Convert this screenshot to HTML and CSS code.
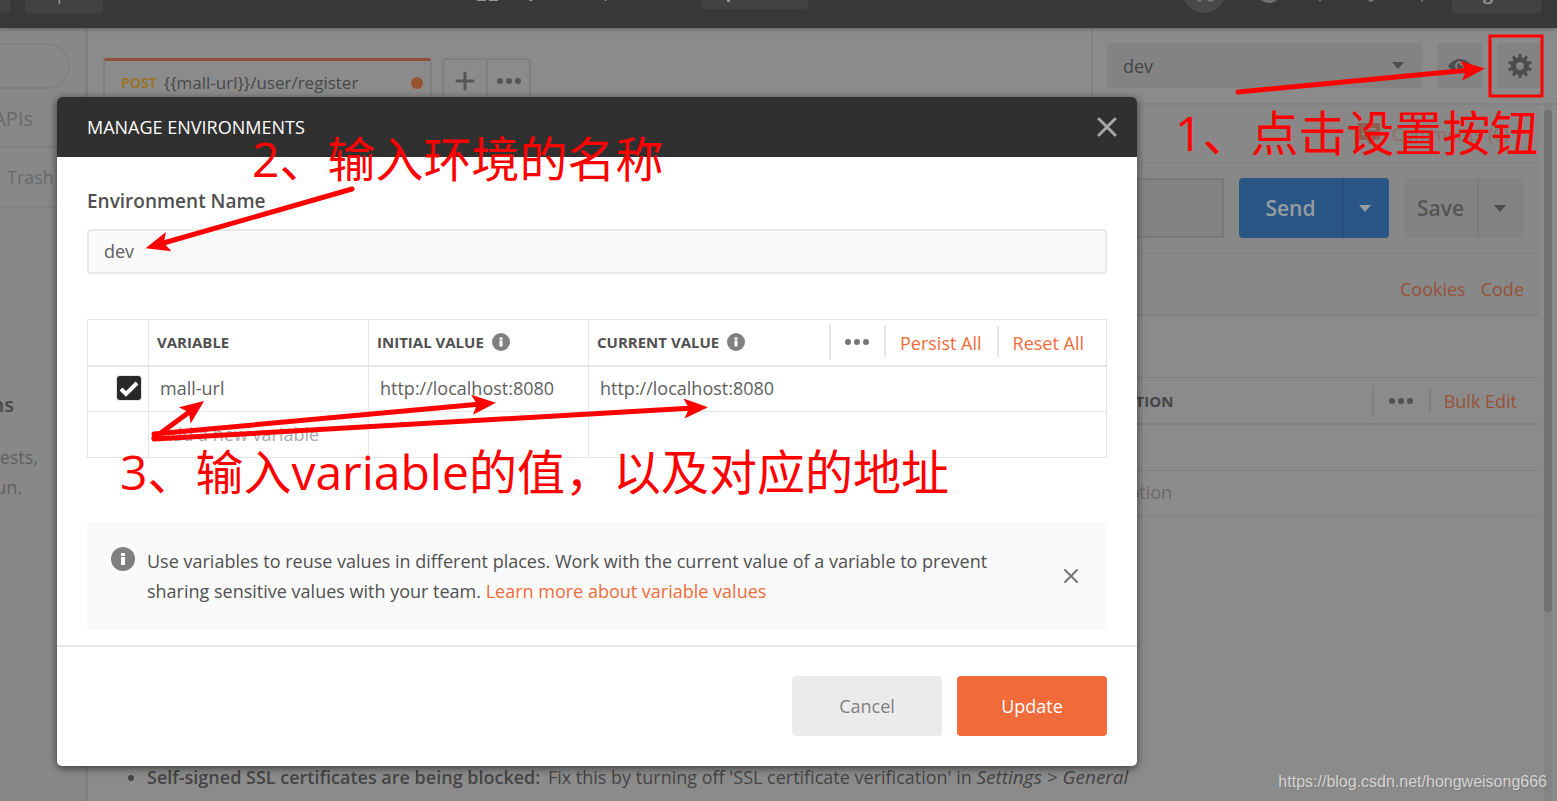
FILE: index.html
```html
<!DOCTYPE html>
<html lang="en">
<head>
<meta charset="utf-8">
<title>Manage Environments</title>
<link rel="stylesheet" href="styles.css">
</head>
<body>
<div class="app">
  <header class="topbar">
    <button class="top-btn new-btn" type="button" aria-label="New"></button>
    <button class="top-btn import-btn" type="button">Import</button>
    <div class="workspace-menu">
      <svg class="grid-icon" width="22" height="22" viewBox="0 0 22 22" aria-hidden="true"><path d="M0 0h9v9H0zM12 0h9v9h-9zM0 12h9v9H0zM12 12h9v9h-9z"/></svg>
      <span>My Workspace</span>
    </div>
    <button class="top-btn invite-btn" type="button"><svg width="15" height="15" viewBox="0 0 15 15" aria-hidden="true"><path d="M6 0h3v6h6v3H9v6H6V9H0V6h6z"/></svg>Invite</button>
    <div class="top-icons">
      <svg class="sync" width="44" height="44" viewBox="0 0 44 44" aria-hidden="true"><circle class="disc" cx="22" cy="22" r="22"/><path class="line" d="M13 29l5 3 4-5M24 28q4 6 8 2"/></svg>
      <svg width="26" height="26" viewBox="0 0 26 26" aria-hidden="true"><circle cx="13" cy="13" r="13"/></svg>
      <svg width="26" height="26" viewBox="0 0 26 26" aria-hidden="true"><path d="M13 25L3 13h20z"/></svg>
      <svg width="26" height="26" viewBox="0 0 26 26" aria-hidden="true"><path d="M4 19h18l-3-6V4H7v9zM10 22a3 3 0 0 0 6 0z"/></svg>
      <svg width="26" height="26" viewBox="0 0 26 26" aria-hidden="true"><path d="M13 25L2 12l3-7 8 3 8-3 3 7z"/></svg>
    </div>
    <button class="top-btn signin-btn" type="button">Sign In</button>
  </header>

  <div class="columns">
    <aside class="sidebar">
      <div class="search"></div>
      <div class="side-tab">APIs</div>
      <div class="side-trash">Trash</div>
      <div class="side-empty">
        <h2>collections</h2>
        <p>group related requests,</p>
        <p class="last">access and run.</p>
      </div>
    </aside>

    <main class="main">
      <div class="tabs-row">
        <div class="tabs">
          <div class="tab"><b>POST</b><span>{{mall-url}}/user/register</span><i class="dot"></i></div>
          <div class="tab-tools">
            <button type="button" aria-label="New tab"><svg width="20" height="20" viewBox="0 0 20 20"><path class="plus" d="M10 2v16M2 10h16"/></svg></button>
            <button type="button" aria-label="Tab options"><svg width="26" height="8" viewBox="0 0 26 8"><circle cx="4" cy="4" r="3"/><circle cx="13" cy="4" r="3"/><circle cx="22" cy="4" r="3"/></svg></button>
          </div>
        </div>
        <div class="env">
          <div class="select-wrap">
            <select class="env-select" aria-label="Environment"><option>dev</option></select>
            <svg class="caret" width="12" height="7" viewBox="0 0 12 7" aria-hidden="true"><path d="M0 0h12L6 7z"/></svg>
          </div>
          <button class="icon-btn" type="button" aria-label="Environment quick look"><svg width="24" height="16" viewBox="0 0 24 16"><path fill-rule="evenodd" d="M0 8Q5 1 12 1t12 7q-5 7-12 7T0 8zm12-5a5 5 0 1 0 0 10 5 5 0 0 0 0-10zm0 2q-1 3 3 3a3 3 0 1 1-3-3z"/></svg></button>
          <button class="icon-btn" type="button" aria-label="Manage environments"><svg width="24" height="24" viewBox="-12 -12 24 24"><path class="teeth" d="M0-12V12M-7-9.700L7 9.700M7-9.700L-7 9.700M-11.400-3.700L11.400 3.700M-11.400 3.700L11.400-3.700"/><circle r="9"/><circle class="hole" r="4"/></svg></button>
        </div>
      </div>

      <div class="request">
        <div class="builder">
          <div class="comments"><svg width="24" height="24" viewBox="0 0 24 24" aria-hidden="true"><path fill-rule="evenodd" d="M1 1h22v17H16l-3 5-3-5H1zM5 6v2h14V6zM5 11v2h14v-2z"/></svg>Comments (0)</div>
          <div class="url-row">
            <input class="url" type="text" aria-label="Request URL">
            <div class="split send"><button type="button">Send</button><button type="button" aria-label="Send options"><svg width="12" height="7" viewBox="0 0 12 7"><path d="M0 0h12L6 7z"/></svg></button></div>
            <div class="split save"><button type="button">Save</button><button type="button" aria-label="Save options"><svg width="12" height="7" viewBox="0 0 12 7"><path d="M0 0h12L6 7z"/></svg></button></div>
          </div>
          <nav class="links"><a href="#">Cookies</a><a href="#">Code</a></nav>
          <div class="params">
            <div class="params-head"><strong>DESCRIPTION</strong><svg width="26" height="8" viewBox="0 0 26 8" aria-hidden="true"><circle cx="4" cy="4" r="3"/><circle cx="13" cy="4" r="3"/><circle cx="22" cy="4" r="3"/></svg><a href="#">Bulk Edit</a></div>
            <div class="params-row"></div>
            <div class="params-row">Description</div>
          </div>
          <ul class="tips"><li><b>Self-signed SSL certificates are being blocked:</b> Fix this by turning off 'SSL certificate verification' in <em>Settings &gt; General</em></li></ul>
        </div>
        <div class="scroll"><div class="thumb"></div></div>
      </div>
    </main>
  </div>

  <section class="modal" role="dialog" aria-labelledby="modal-title">
    <header class="modal-head">
      <h1 id="modal-title">MANAGE ENVIRONMENTS</h1>
      <button class="close" type="button" aria-label="Close"><svg width="20" height="20" viewBox="0 0 20 20"><path d="M2 2l16 16M18 2L2 18"/></svg></button>
    </header>
    <div class="modal-body">
      <label class="field-label" for="env-name">Environment Name</label>
      <input class="field" id="env-name" type="text" value="dev">
      <table class="vars">
        <colgroup><col class="c-check"><col class="c-var"><col class="c-var"><col></colgroup>
        <thead>
          <tr>
            <th></th>
            <th>VARIABLE</th>
            <th><div class="th">INITIAL VALUE<svg class="info" width="18" height="18" viewBox="0 0 24 24" aria-hidden="true"><circle cx="12" cy="12" r="12"/><path d="M10 6h4v3h-4zM10 10h4v8h-4z"/></svg></div></th>
            <th><div class="th">CURRENT VALUE<svg class="info" width="18" height="18" viewBox="0 0 24 24" aria-hidden="true"><circle cx="12" cy="12" r="12"/><path d="M10 6h4v3h-4zM10 10h4v8h-4z"/></svg>
              <div class="actions"><button class="more" type="button" aria-label="More"><svg width="26" height="8" viewBox="0 0 26 8"><circle cx="4" cy="4" r="3"/><circle cx="13" cy="4" r="3"/><circle cx="22" cy="4" r="3"/></svg></button><a href="#">Persist All</a><a href="#">Reset All</a></div></div></th>
          </tr>
        </thead>
        <tbody>
          <tr>
            <td class="check-cell"><label class="check"><input type="checkbox" checked aria-label="Enable mall-url"><svg width="24" height="24" viewBox="0 0 24 24" aria-hidden="true"><path d="M4 13l5 5L20 7"/></svg></label></td>
            <td><input type="text" value="mall-url" aria-label="Variable"></td>
            <td><input type="text" value="http://localhost:8080" aria-label="Initial value"></td>
            <td><input type="text" value="http://localhost:8080" aria-label="Current value"></td>
          </tr>
          <tr>
            <td></td>
            <td><input type="text" placeholder="Add a new variable" aria-label="New variable"></td>
            <td></td>
            <td></td>
          </tr>
        </tbody>
      </table>
      <div class="notice">
        <svg class="info" width="24" height="24" viewBox="0 0 24 24" aria-hidden="true"><circle cx="12" cy="12" r="12"/><path d="M10 6h4v3h-4zM10 10h4v8h-4z"/></svg>
        <p>Use variables to reuse values in different places. Work with the current value of a variable to prevent sharing sensitive values with your team. <a href="#">Learn more about variable values</a></p>
        <button class="dismiss" type="button" aria-label="Dismiss"><svg width="16" height="16" viewBox="0 0 16 16"><path d="M2 2l12 12M14 2L2 14"/></svg></button>
      </div>
    </div>
    <footer class="modal-foot">
      <button class="btn cancel" type="button">Cancel</button>
      <button class="btn update" type="button">Update</button>
    </footer>
  </section>

  <svg class="arrows" width="100%" height="100%" aria-hidden="true">
    <defs>
      <marker id="head" markerUnits="userSpaceOnUse" markerWidth="30" markerHeight="24" refX="9" refY="12" orient="auto"><path d="M24 12L0 2l5 10-5 10z"/></marker>
    </defs>
    <path class="shaft" d="M1238 92L1470 70"/>
    <path class="shaft" d="M352 189L160 244"/>
    <path class="shaft" d="M154 438L192 410"/>
    <path class="shaft" d="M154 434L481 404"/>
    <path class="shaft" d="M154 439L693 408"/>
    <rect x="1490" y="36" width="52" height="60"/>
  </svg>
  <p class="note note-1" lang="zh">1、点击设置按钮</p>
  <p class="note note-2" lang="zh">2、输入环境的名称</p>
  <p class="note note-3" lang="zh">3、输入variable的值，以及对应的地址</p>
  <p class="watermark">https://blog.csdn.net/hongweisong666</p>
</div>
</body>
</html>
```
FILE: styles.css
```css
* { box-sizing: border-box; }
body { margin: 0; font: 18px/30px "Open Sans", "Noto Sans", sans-serif; color: #505050; }
h1, h2, p, ul { margin: 0; }
button, input, select { font: inherit; color: inherit; border: 0; margin: 0; padding: 0; background: none; }
svg { display: block; flex: none; }
a { color: #f26b3a; text-decoration: none; }

.app { position: relative; height: 100vh; min-height: 801px; display: flex; flex-direction: column; background: #8b8b8b; overflow: hidden; }

.topbar { position: relative; height: 28px; flex: none; display: flex; align-items: flex-end; background: #383838; color: #959595; fill: #959595; padding: 0 15px 15px 0; box-shadow: 0 1px 4px rgba(0, 0, 0, .3); }
.top-btn { flex: none; height: 40px; border-radius: 4px; background: #424242; }
.new-btn { width: 10px; }
.import-btn { width: 78px; margin-left: 15px; }
.workspace-menu { display: flex; align-items: center; gap: 12px; height: 48px; margin-left: 374px; font-size: 20px; }
.grid-icon { margin-top: 4px; }
.invite-btn { display: flex; align-items: center; justify-content: center; gap: 8px; width: 106px; height: 44px; margin: 0 auto 4px 55px; }
.invite-btn svg { margin-top: 14px; }
.top-icons { display: flex; align-items: flex-end; gap: 25px; fill: #707070; margin-right: 17px; }
.top-icons svg { margin-bottom: 10px; }
.top-icons .sync { margin: 0 5px 0 0; }
.disc { fill: #4a4a4a; }
.line { fill: none; stroke: #777; stroke-width: 2; }
.signin-btn { width: 90px; font-weight: 600; }

.columns { flex: 1; display: flex; min-height: 0; }
.sidebar { width: 88px; flex: none; display: flex; flex-direction: column; background: #888; border-right: 3px solid #7f7f7f; color: #6a6a6a; overflow: hidden; }
.search { width: 90px; height: 46px; margin: 15px 0 0 -20px; border: 2px solid #818181; border-radius: 23px; }
.side-tab { display: flex; justify-content: flex-end; align-items: center; height: 59px; padding: 2px 52px 0 0; font-size: 20px; border-bottom: 2px solid #808080; }
.side-trash { display: flex; align-items: center; height: 60px; padding-left: 7px; border-bottom: 2px solid #808080; }
.side-empty { display: flex; flex-direction: column; align-items: flex-end; padding-top: 182px; color: #606060; white-space: nowrap; }
.side-empty h2 { margin: 0 71px 22px 0; font-size: 20px; line-height: 30px; font-weight: 600; color: #484848; }
.side-empty p { margin-right: 47px; }
.side-empty .last { margin-right: 63px; }

.main { flex: 1; min-width: 0; display: flex; flex-direction: column; }
.tabs-row { display: flex; height: 77px; flex: none; border-bottom: 2px solid #828282; }
.tabs { flex: 1; display: flex; align-items: flex-end; gap: 10px; padding-left: 15px; }
.tab { display: flex; align-items: center; gap: 7px; width: 329px; height: 45px; padding: 4px 7px 0 16px; border: 2px solid #808080; border-top: 3px solid #8f4f3a; border-radius: 4px 4px 0 0; font-size: 17px; color: #484848; }
.tab b { font-size: 14px; color: #98752a; }
.dot { width: 12px; height: 12px; margin-left: auto; border-radius: 50%; background: #97522f; }
.tab-tools { display: flex; height: 45px; border: 2px solid #808080; border-radius: 4px 4px 0 0; fill: #555; }
.tab-tools button { display: grid; place-items: center; width: 42px; }
.tab-tools button + button { width: 43px; border-left: 2px solid #808080; }
.plus { fill: none; stroke: #555; stroke-width: 3; stroke-linecap: round; }
.env { display: flex; gap: 15px; padding: 15px 15px 0 14px; border-left: 2px solid #828282; fill: #4c4c4c; }
.select-wrap { display: grid; align-items: center; width: 315px; height: 45px; border-radius: 4px; background: #838383; }
.env-select { appearance: none; grid-area: 1 / 1; width: 100%; height: 45px; padding-left: 16px; color: #444; font-weight: 500; }
.caret { grid-area: 1 / 1; justify-self: end; margin-right: 18px; }
.icon-btn { display: grid; place-items: center; width: 45px; height: 45px; border-radius: 4px; background: #838383; }
.teeth { stroke: #4c4c4c; stroke-width: 3; }
.hole { fill: #838383; }

.request { flex: 1; display: flex; min-height: 0; }
.builder { flex: 1; min-width: 0; display: flex; flex-direction: column; background: #8b8b8b; }
.comments { display: flex; align-items: center; justify-content: flex-end; gap: 11px; height: 58px; padding-right: 30px; border-bottom: 1px solid #808080; background: #888; color: #8f6d63; fill: #8f5d51; }
.url-row { display: flex; gap: 15px; height: 91px; padding: 15px; border-bottom: 1px solid #808080; background: #888; }
.url { flex: 1; min-width: 0; height: 60px; border: 2px solid #797979; background: #838383; }
.split { display: flex; height: 60px; border-radius: 4px; font-size: 21px; font-weight: 600; overflow: hidden; }
.split button { display: grid; place-items: center; flex: 1; }
.split button + button { flex: none; width: 47px; padding-right: 4px; border-left: 2px solid; }
.send { width: 150px; background: #2a5686; color: #979ca1; fill: #979ca1; }
.send button + button { border-color: #25507e; }
.save { width: 120px; background: #838383; color: #555; fill: #4c4c4c; }
.save button + button { border-color: #7b7b7b; }
.builder a { color: #975239; }
.links { display: flex; justify-content: flex-end; align-items: center; gap: 15px; height: 62px; padding: 10px 15px 0 0; border-bottom: 2px solid #808080; background: #888; }
.params { margin-top: 61px; border-top: 1px solid #808080; }
.params-head { display: flex; align-items: center; justify-content: flex-end; height: 47px; padding-right: 22px; border-bottom: 2px solid #808080; fill: #505050; color: #444; font-size: 15px; }
.params-head strong { margin-right: auto; padding-left: 986px; }
.params-head svg { box-sizing: content-box; padding: 12px 15px 12px 14px; border-left: 2px solid #808080; }
.params-head a { padding-left: 13px; line-height: 24px; border-left: 2px solid #808080; font-size: 18px; }
.params-row { height: 46px; padding-left: 988px; line-height: 42px; color: #6a6a6a; border-bottom: 1px solid #808080; }
.tips { margin-top: auto; padding: 0 0 9px 59px; color: #444; white-space: nowrap; }
.tips b { font-weight: 600; margin-right: 3px; }
.tips em { font-size: 19px; }
.scroll { width: 18px; padding: 5px 5px 0 5px; background: linear-gradient(90deg, #8b8b8b 5px, #848484 5px 13px, #8b8b8b 13px); }
.thumb { height: 502px; border-radius: 4px; background: #717171; }

.modal { position: absolute; top: 97px; left: 57px; width: 1080px; max-width: calc(100% - 114px); border-radius: 5px; background: #fff; box-shadow: 0 2px 8px rgba(0, 0, 0, .6); overflow: hidden; }
.modal-head { display: flex; align-items: center; justify-content: space-between; height: 60px; padding: 0 20px 0 30px; background: #303030; color: #fff; }
.modal-head h1 { font-size: 18px; font-weight: 500; }
.close svg, .dismiss svg { fill: none; stroke: #a6a6a6; stroke-width: 3; stroke-linecap: round; }
.modal-body { padding: 29px 30px 15px; }
.field-label { display: block; font-size: 19px; font-weight: 600; }
.field { display: block; width: 100%; height: 45px; margin: 13px 0 45px; padding: 0 14px 2px 15px; border: 2px solid #e8e8e8; border-radius: 4px; background: #fafafa; color: #606060; }
.vars { width: 100%; border-collapse: collapse; table-layout: fixed; }
.vars th, .vars td { height: 46px; padding: 0 0 1px 8px; border: 1px solid #e6e6e6; text-align: left; }
.vars th { font-size: 15px; border-bottom-width: 2px; }
.vars td input[type="text"] { display: block; width: 100%; padding-left: 3px; color: #606060; }
.vars input::placeholder { color: #a8a8a8; opacity: 1; }
.c-check { width: 61px; }
.c-var { width: 220px; }
.th { display: flex; align-items: center; gap: 8px; }
.info { fill: #808080; }
.info path { fill: #fff; }
.actions { display: flex; align-items: center; margin-left: auto; padding-right: 22px; font-size: 18px; font-weight: 400; }
.actions .more { display: grid; place-items: center; width: 55px; height: 36px; border-left: 2px solid #e6e6e6; fill: #757575; }
.actions a { padding: 3px 0 0 14px; line-height: 28px; border-left: 2px solid #e6e6e6; }
.actions a + a { margin-left: 15px; }
.check { display: grid; justify-content: end; padding-right: 7px; }
.check input, .check svg { grid-area: 1 / 1; }
.check input { appearance: none; width: 24px; height: 24px; border-radius: 3px; background: #282828; box-shadow: 0 0 0 1px #e4e4e4; }
.check svg { fill: none; stroke: #fff; stroke-width: 4; pointer-events: none; }
.notice { display: flex; gap: 12px; margin-top: 64px; padding: 24px 28px 24px 24px; background: #fafafa; }
.notice .info { margin-top: 1px; }
.notice p { flex: 1; max-width: 860px; }
.dismiss { margin-left: auto; }
.dismiss svg { stroke: #757575; stroke-width: 2; }
.modal-foot { display: flex; justify-content: flex-end; gap: 15px; padding: 29px 30px 30px; border-top: 2px solid #e8e8e8; }
.btn { width: 150px; height: 60px; border-radius: 4px; }
.cancel { background: #ebebeb; color: #808080; }
.update { background: #f26b3a; color: #fff; font-weight: 500; }

.arrows { position: absolute; inset: 0; fill: #f00; pointer-events: none; }
.shaft { stroke: #f00; stroke-width: 5; stroke-linecap: round; marker-end: url(#head); }
.arrows rect { fill: none; stroke: #f00; stroke-width: 3; }
.note { position: absolute; font: 48px/70px "Open Sans", "Noto Sans CJK SC", sans-serif; color: #f00; white-space: nowrap; pointer-events: none; }
.note-1 { top: 98px; left: 1175px; }
.note-2 { top: 124px; left: 252px; }
.note-3 { top: 437px; left: 120px; }
.watermark { position: absolute; right: 10px; bottom: 8px; font: 16px/22px "Liberation Sans", Arial, sans-serif; color: #d4d4d4; text-shadow: 1px 1px 1px #777; }
```
